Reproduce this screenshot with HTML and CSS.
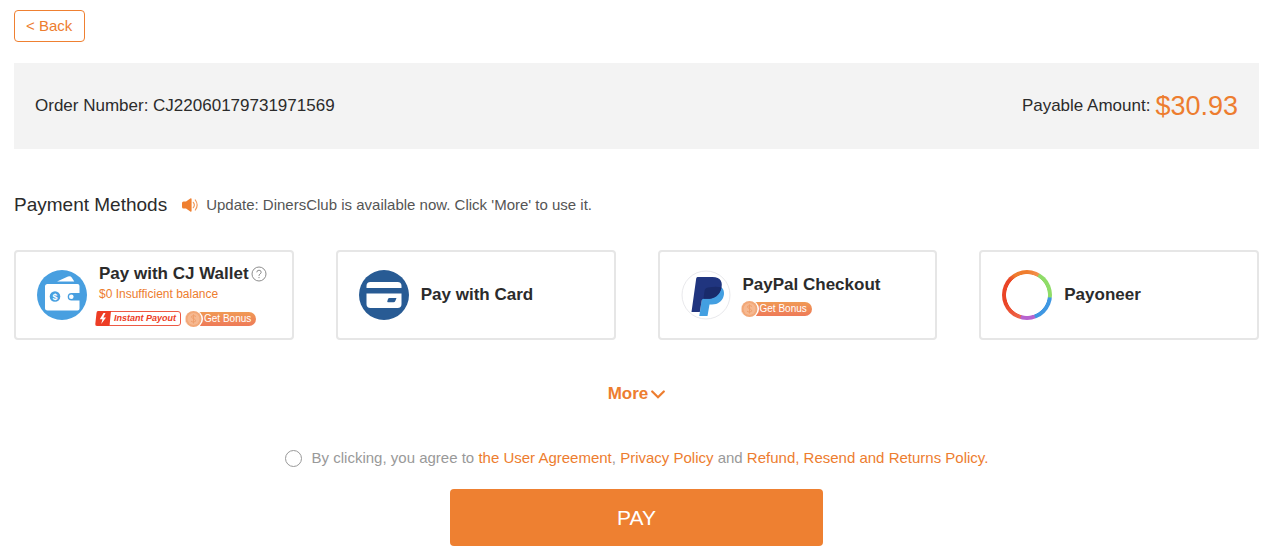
FILE: index.html
```html
<!DOCTYPE html>
<html lang="en">
<head>
<meta charset="utf-8">
<meta name="viewport" content="width=device-width, initial-scale=1">
<title>Payment</title>
<link rel="stylesheet" href="styles.css">
</head>
<body>
<main class="page">
  <button class="back" type="button">&lt; Back</button>

  <section class="summary">
    <span>Order Number: CJ22060179731971569</span>
    <span class="payable">Payable Amount: <strong class="amount">$30.93</strong></span>
  </section>

  <header class="heading">
    <h1 class="heading-title">Payment Methods</h1>
    <svg class="speaker" viewBox="0 0 16 14" aria-hidden="true">
      <path d="M1.5 3.500H4L8.300 .4Q9.600 -.2 9.600 1.200V12.800Q9.600 14.200 8.300 13.600L4 10.500H1.500Q0 10.500 0 9V5Q0 3.500 1.500 3.500Z" fill="#ef8031"/>
      <path d="M11.300 4.300Q13.400 7 11.300 9.700M13.300 2Q17 7 13.300 12" fill="none" stroke="#f19a5c" stroke-width="1.200" stroke-linecap="round"/>
    </svg>
    <p class="notice">Update: DinersClub is available now. Click 'More' to use it.</p>
  </header>

  <section class="methods" aria-label="Payment methods">
    <button class="method" type="button">
      <svg class="logo" viewBox="0 0 50 50" aria-hidden="true">
        <circle cx="25" cy="25" r="25" fill="#489fe0"/>
        <path d="M20 11.500L31 6.600Q33.500 5.700 34.700 7.600L37.300 11.500Z" fill="#fff"/>
        <path d="M10.500 14H40.500Q42.500 14 42.500 16V23H34.500A3.800 3.800 0 0 0 34.500 30.600H42.500V38.500Q42.500 40.500 40.500 40.500H10.500Q8 40.500 8 38.500V16.500Q8 14 10.500 14Z" fill="#fff"/>
        <circle cx="34.300" cy="26.800" r="2.300" fill="#fff"/>
        <circle cx="18" cy="26.500" r="5.300" fill="#489fe0"/>
        <text class="coin-sign" x="18" y="29.800" fill="#fff">$</text>
      </svg>
      <span class="details">
        <span class="name">Pay with CJ Wallet
          <svg class="help" viewBox="0 0 16 16" aria-hidden="true">
            <circle cx="8" cy="8" r="7" fill="none" stroke="#8d8d8d"/>
            <path d="M5.800 6.300Q5.900 4.200 8 4.200T10.200 6.200Q10.200 7.200 9 8T8 9.900" fill="none" stroke="#8d8d8d"/>
            <circle cx="8" cy="11.600" r=".7" fill="#8d8d8d"/>
          </svg>
        </span>
        <span class="balance">$0 Insufficient balance</span>
        <span class="badges badges-wide">
          <span class="instant">
            <svg class="bolt" viewBox="0 0 16 15" aria-hidden="true">
              <path d="M3 0H16L14.500 15H2Q0 15 .3 13L1.500 2Q1.700 0 3 0Z" fill="#ed3d25"/>
              <path d="M8.500 2L4.800 8.200H7.500L6.200 13L11 6.600H8.300L10.500 2Z" fill="#fff"/>
            </svg>
            <span class="instant-text">Instant Payout</span>
          </span>
          <span class="bonus">
            <svg class="coin" viewBox="0 0 18 18" aria-hidden="true">
              <circle cx="9" cy="9" r="9" fill="#fff"/>
              <circle cx="8.500" cy="9" r="8" fill="#f2a878"/>
              <circle cx="8.500" cy="9" r="6" fill="#f6b890"/>
              <path d="M11 6.500Q8.500 4.500 6.600 6.300C5.500 8.800 11.500 8.500 10.500 11.300Q8.500 13.300 6 11.200M8.500 4.400V13.500" fill="none" stroke="#ef9f6c"/>
            </svg>
            <span>Get Bonus</span>
          </span>
        </span>
      </span>
    </button>

    <button class="method" type="button">
      <svg class="logo" viewBox="0 0 50 50" aria-hidden="true">
        <circle cx="25" cy="25" r="25" fill="#285b94"/>
        <path d="M11.500 12H38.500Q42.500 12 42.500 16V18H7.500V16Q7.500 12 11.500 12Z" fill="#fff"/>
        <path d="M7.500 23.500H42.500V34Q42.500 38 38.500 38H11.500Q7.500 38 7.500 34Z" fill="#fff"/>
        <path d="M30.500 28H37.500L36.300 31Q35.800 32.300 34.500 32.300H29Q28 32.300 28.300 31.300L29 29Q29.300 28 30.500 28Z" fill="#285b94"/>
      </svg>
      <span class="details"><span class="name">Pay with Card</span></span>
    </button>

    <button class="method" type="button">
      <svg class="logo" viewBox="0 0 50 50" aria-hidden="true">
        <circle cx="25" cy="25" r="24" fill="#fff" stroke="#e9e9ec"/>
        <path d="M40.500 17.500C45.500 21 43.500 34.500 31 34.500H28.500L26.500 46H18.300L21 28Z" fill="#439fe1"/>
        <path d="M16.500 7H31.500C40 7 42 12.500 40.300 18.500C38.500 25.500 33.500 28.800 26 28.800H22.500Q21 28.800 20.700 30.500L18.800 42H10.500L15.200 8.500Q15.400 7 16.500 7Z" fill="#20357f"/>
        <path d="M40.500 17.500C38.500 25.500 33.500 28.800 26 28.800H22.500L23.500 21Q23.800 18 27 17.500Q36 16 40.500 17.500Z" fill="#192b6b"/>
      </svg>
      <span class="details">
        <span class="name">PayPal Checkout</span>
        <span class="badges">
          <span class="bonus">
            <svg class="coin" viewBox="0 0 18 18" aria-hidden="true">
              <circle cx="9" cy="9" r="9" fill="#fff"/>
              <circle cx="8.500" cy="9" r="8" fill="#f2a878"/>
              <circle cx="8.500" cy="9" r="6" fill="#f6b890"/>
              <path d="M11 6.500Q8.500 4.500 6.600 6.300C5.500 8.800 11.500 8.500 10.500 11.300Q8.500 13.300 6 11.200M8.500 4.400V13.500" fill="none" stroke="#ef9f6c"/>
            </svg>
            <span>Get Bonus</span>
          </span>
        </span>
      </span>
    </button>

    <button class="method" type="button">
      <span class="logo ring"></span>
      <span class="details"><span class="name">Payoneer</span></span>
    </button>
  </section>

  <button class="more" type="button">More
    <svg class="chevron" viewBox="0 0 14 9" aria-hidden="true"><path d="M1.200 1.500L7 7.300L12.800 1.500" fill="none" stroke="#ed7d2f" stroke-width="2.200" stroke-linecap="round"/></svg>
  </button>

  <div class="agreement">
    <input class="agree-input" id="agree" type="radio">
    <p class="agree-text"><label for="agree">By clicking, you agree to</label> <a href="#user">the User Agreement</a>, <a href="#privacy">Privacy Policy</a> and <a href="#refund">Refund, Resend and Returns Policy.</a></p>
  </div>

  <button class="pay" type="button">PAY</button>
</main>
</body>
</html>
```

FILE: styles.css
```css
* { box-sizing: border-box; }

body {
  margin: 0;
  background: #fff;
  color: #2b2b2b;
  font-family: "Liberation Sans", Arial, sans-serif;
}

button {
  font-family: inherit;
  cursor: pointer;
}

.page {
  display: flex;
  flex-direction: column;
  padding: 10px 21px 11px 14px;
}

.back {
  align-self: flex-start;
  height: 32px;
  padding: 0 12px 2px 11px;
  border: 1px solid #ef8031;
  border-radius: 4px;
  background: #fff;
  color: #ed7d2f;
  font-size: 15px;
}

.summary {
  display: flex;
  align-items: center;
  justify-content: space-between;
  min-height: 86px;
  margin-top: 21px;
  padding: 0 21px;
  background: #f3f3f3;
  font-size: 17px;
}

.payable {
  display: flex;
  align-items: center;
  gap: 5px;
}

.amount {
  color: #ed7d2f;
  font-size: 27px;
  font-weight: 400;
}

.heading {
  display: flex;
  align-items: center;
  margin-top: 44px;
  line-height: 24px;
}

.heading-title {
  margin: 0;
  font-size: 19px;
  font-weight: 400;
}

.speaker {
  width: 16px;
  height: 14px;
  margin: 0 8px 0 15px;
}

.notice {
  margin: 0;
  color: #555;
  font-size: 15px;
}

.methods {
  display: grid;
  grid-template-columns: repeat(4, 1fr);
  gap: 42px;
  margin-top: 33px;
}

.method {
  display: flex;
  align-items: center;
  gap: 12px;
  min-height: 90px;
  padding: 0 8px 0 21px;
  border: 2px solid #e6e6e6;
  border-radius: 4px;
  background: #fff;
  color: #2b2b2b;
  text-align: left;
}

.logo {
  flex: none;
  width: 50px;
  height: 50px;
}

.coin-sign {
  font-size: 9px;
  font-weight: 700;
  text-anchor: middle;
}

.ring {
  border-radius: 50%;
  background:
    radial-gradient(closest-side, #fff 82%, transparent 85%),
    conic-gradient(#ef7d2e 0deg, #f3914e 28deg, #8fdc68 32deg, #8fdc68 94deg, #3f97e2 98deg, #3f97e2 158deg, #b763cf 162deg, #b763cf 194deg, #ee6549 198deg, #ea4426 250deg, #ea4426 310deg, #ef7d2e 330deg);
}

.details {
  display: flex;
  flex-direction: column;
  align-items: flex-start;
}

.name {
  display: flex;
  align-items: center;
  gap: 2px;
  font-size: 17px;
  font-weight: 700;
  line-height: 20px;
  white-space: nowrap;
}

.help {
  width: 16px;
  height: 16px;
}

.balance {
  color: #ed7d2f;
  font-size: 12px;
  line-height: 20px;
}

.badges {
  display: flex;
  align-items: center;
  gap: 4px;
  margin: 7px 0 0 -2px;
  font-size: 10px;
  line-height: 14px;
  white-space: nowrap;
}

.badges-wide {
  margin-left: -4px;
}

.instant {
  display: flex;
  align-items: center;
  color: #ed3d25;
  font-style: italic;
  font-weight: 700;
}

.bolt {
  z-index: 1;
  width: 16px;
  height: 15px;
}

.instant-text {
  margin-left: -4px;
  padding: 0 4px 0 6px;
  border: 1px solid #ed5a45;
  border-radius: 3px;
  font-size: 9px;
  line-height: 13px;
}

.bonus {
  display: flex;
  align-items: center;
  height: 14px;
  padding-right: 5px;
  border-radius: 8px;
  background: linear-gradient(#f09a55, #ee7a58);
  color: #fff;
}

.coin {
  width: 18px;
  height: 18px;
  margin-right: 1px;
}

.more {
  display: flex;
  align-items: center;
  align-self: center;
  gap: 3px;
  margin-top: 43px;
  padding: 0;
  border: 0;
  background: none;
  color: #ed7d2f;
  font-size: 17px;
  font-weight: 700;
  line-height: 22px;
}

.chevron {
  width: 14px;
  height: 9px;
}

.agreement {
  display: flex;
  align-items: center;
  align-self: center;
  gap: 10px;
  margin-top: 42px;
  color: #999;
  font-size: 15px;
  line-height: 22px;
}

.agree-input {
  appearance: none;
  width: 17px;
  height: 17px;
  margin: 0;
  border: 1px solid #999;
  border-radius: 50%;
}

.agree-input:checked {
  background: #ed7d2f;
}

.agree-text { margin: 0; }

.agree-text a {
  color: #ed7d2f;
  text-decoration: none;
}

.pay {
  align-self: center;
  width: 30%;
  height: 57px;
  margin-top: 20px;
  border: 0;
  border-radius: 4px;
  background: #ee8031;
  color: #fff;
  font-size: 21px;
}
```
